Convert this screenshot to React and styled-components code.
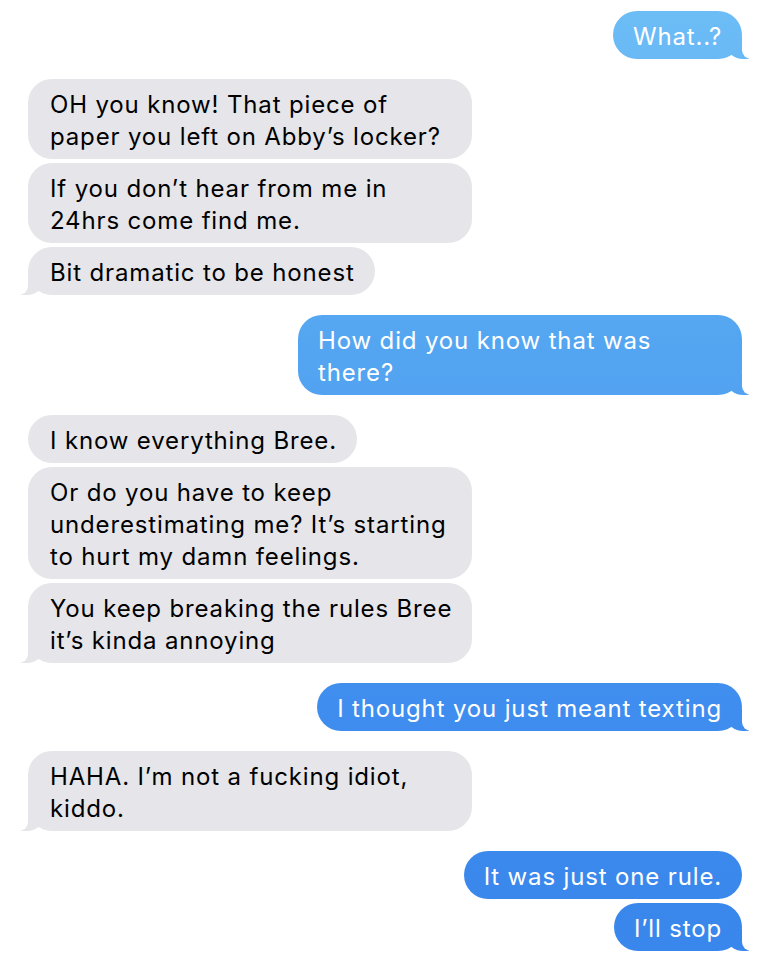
import React from 'react';
import styled, { createGlobalStyle, css } from 'styled-components';

const GlobalStyle = createGlobalStyle`
  html, body {
    margin: 0;
    padding: 0;
    background: #fff;
  }
  body {
    font-family: 'Inter', 'Liberation Sans', sans-serif;
    -webkit-font-smoothing: antialiased;
  }
`;

const BLUE = 'linear-gradient(to bottom, #6dbdf6 0%, #55a6f1 35%, #3f8dee 73%, #3986ec 100%)';
const GRAY = '#e5e5ea';

const Thread = styled.div`
  display: flex;
  flex-direction: column;
  gap: 20px;
  padding: 11px 28px 0;
  width: 770px;
  box-sizing: border-box;
`;

const Group = styled.div`
  display: flex;
  flex-direction: column;
  align-items: ${(p) => (p.$me ? 'flex-end' : 'flex-start')};
  gap: 4px;
`;

const tailMe = css`
  &::before {
    content: '';
    position: absolute;
    bottom: 0;
    right: -7px;
    width: 22px;
    height: 22px;
    background: ${BLUE};
    background-attachment: fixed;
    border-bottom-left-radius: 16px 14px;
  }
  &::after {
    content: '';
    position: absolute;
    bottom: 0;
    right: -30px;
    width: 30px;
    height: 24px;
    background: #fff;
    border-bottom-left-radius: 9px;
  }
`;

const tailThem = css`
  &::before {
    content: '';
    position: absolute;
    bottom: 0;
    left: -7px;
    width: 22px;
    height: 22px;
    background: ${GRAY};
    border-bottom-right-radius: 16px 14px;
  }
  &::after {
    content: '';
    position: absolute;
    bottom: 0;
    left: -30px;
    width: 30px;
    height: 24px;
    background: #fff;
    border-bottom-right-radius: 9px;
  }
`;

const Bubble = styled.div`
  position: relative;
  box-sizing: border-box;
  width: ${(p) => (p.$wide ? '444px' : 'auto')};
  padding: 10px 20px 6px ${(p) => (p.$me ? '20px' : '22px')};
  border-radius: 24px;
  font-size: 24px;
  letter-spacing: 0.85px;
  line-height: 32px;
  white-space: nowrap;
  color: ${(p) => (p.$me ? '#fff' : '#000')};
  background: ${(p) => (p.$me ? BLUE : GRAY)};
  background-attachment: fixed;
  ${(p) => p.$tail && (p.$me ? tailMe : tailThem)}
`;

const Line = styled.span`
  display: block;
`;

const thread = [
  { me: true, msgs: [['What..?']] },
  {
    me: false,
    msgs: [
      ['OH you know! That piece of', 'paper you left on Abby’s locker?'],
      ['If you don’t hear from me in', '24hrs come find me.'],
      ['Bit dramatic to be honest'],
    ],
  },
  { me: true, msgs: [['How did you know that was', 'there?']] },
  {
    me: false,
    msgs: [
      ['I know everything Bree.'],
      ['Or do you have to keep', 'underestimating me? It’s starting', 'to hurt my damn feelings.'],
      ['You keep breaking the rules Bree', 'it’s kinda annoying'],
    ],
  },
  { me: true, msgs: [['I thought you just meant texting']] },
  { me: false, msgs: [['HAHA. I’m not a fucking idiot,', 'kiddo.']] },
  { me: true, msgs: [['It was just one rule.'], ['I’ll stop']] },
];

export default function App() {
  return (
    <>
      <GlobalStyle />
      <Thread>
        {thread.map((g, gi) => (
          <Group key={gi} $me={g.me}>
            {g.msgs.map((lines, mi) => (
              <Bubble
                key={mi}
                $me={g.me}
                $wide={lines.length > 1}
                $tail={mi === g.msgs.length - 1}
              >
                {lines.map((l, li) => (
                  <Line key={li}>{l}</Line>
                ))}
              </Bubble>
            ))}
          </Group>
        ))}
      </Thread>
    </>
  );
}
